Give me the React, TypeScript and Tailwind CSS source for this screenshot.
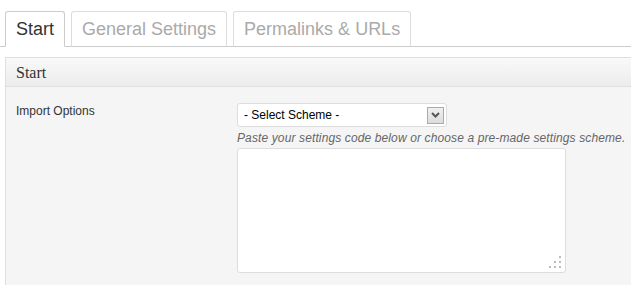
import React from "react";

function Chevron() {
  return (
    <svg width="9" height="6" viewBox="0 0 9 6">
      <path d="M1 1 L4.5 4.5 L8 1" fill="none" stroke="#555" strokeWidth="2" />
    </svg>
  );
}

function Grip() {
  return (
    <svg width="12" height="12" viewBox="0 0 12 12">
      <rect x="10" y="0" width="2" height="2" fill="#bbb" />
      <rect x="5" y="5" width="2" height="2" fill="#bbb" />
      <rect x="10" y="5" width="2" height="2" fill="#bbb" />
      <rect x="0" y="10" width="2" height="2" fill="#bbb" />
      <rect x="5" y="10" width="2" height="2" fill="#bbb" />
      <rect x="10" y="10" width="2" height="2" fill="#bbb" />
    </svg>
  );
}

export default function App() {
  const tabs = ["Start", "General Settings", "Permalinks & URLs"];
  return (
    <div
      className="w-[631px] h-[285px] overflow-hidden bg-white"
      style={{ fontFamily: '"Liberation Sans", Arial, sans-serif' }}
    >
      <div className="pt-[11px] border-b border-[#cccccc] flex gap-[6px] pl-[5px]">
        {tabs.map((t, i) => (
          <div
            key={t}
            className={
              "-mb-px px-[10px] py-[5px] text-[18px] leading-[24px] rounded-t-[3px] border bg-white " +
              (i === 0
                ? "border-[#cccccc] border-b-white text-[#333333]"
                : "border-[#dddddd] border-b-[#cccccc] text-[#aaaaaa]")
            }
          >
            {t}
          </div>
        ))}
      </div>

      <div className="mt-[10px] ml-[5px] border border-r-0 border-[#dfdfdf] bg-[#f5f5f5] h-[300px]">
        <div className="h-[29px] border-b border-[#dfdfdf] bg-gradient-to-b from-[#f9f9f9] to-[#ececec] flex items-center pl-[10px]">
          <span
            className="text-[16px] text-[#333333] leading-none pt-[1px]"
            style={{ fontFamily: '"Liberation Serif", Georgia, serif' }}
          >
            Start
          </span>
        </div>
        <div className="flex pt-[16px] pl-[10px]">
          <div className="w-[221px] pt-[1px] text-[12px] leading-[14px] text-[#333333]">Import Options</div>
          <div className="flex flex-col">
            <div className="w-[210px] h-[24px] bg-white border border-[#dddddd] rounded-[3px] flex items-center justify-between pl-[6px] pr-[2px]">
              <span className="text-[12px] text-black">- Select Scheme -</span>
              <div className="w-[17px] h-[17px] border border-[#aaaaaa] bg-gradient-to-b from-[#f0f0f0] to-[#dcdcdc] flex items-center justify-center">
                <Chevron />
              </div>
            </div>
            <div className="mt-[3px] text-[12px] leading-[16px] italic tracking-[0.12px] text-[#666666] whitespace-nowrap">
              Paste your settings code below or choose a pre-made settings scheme.
            </div>
            <div className="mt-[2px] w-[329px] h-[125px] bg-white border border-[#dddddd] rounded-[3px] flex items-end justify-end pr-[4px] pb-[4px]">
              <Grip />
            </div>
          </div>
        </div>
      </div>
    </div>
  );
}
